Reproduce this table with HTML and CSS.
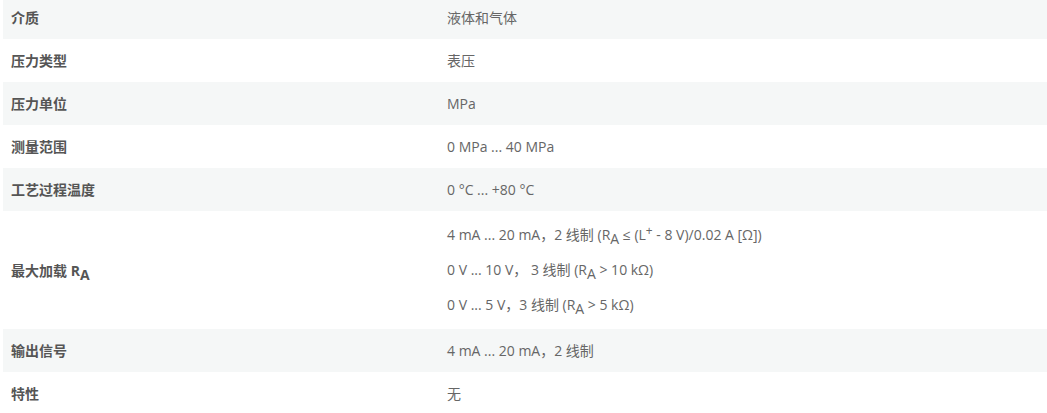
FILE: index.html
```html
<!DOCTYPE html>
<html lang="zh-CN">
<head>
<meta charset="utf-8">
<title>规格</title>
<link rel="stylesheet" href="styles.css">
</head>
<body>
<table class="spec">
  <colgroup><col class="col-label"><col class="col-value"></colgroup>
  <tbody>
    <tr class="odd"><th>介质</th><td>液体和气体</td></tr>
    <tr><th>压力类型</th><td>表压</td></tr>
    <tr class="odd"><th>压力单位</th><td>MPa</td></tr>
    <tr><th>测量范围</th><td>0 MPa ... 40 MPa</td></tr>
    <tr class="odd"><th>工艺过程温度</th><td>0 °C ... +80 °C</td></tr>
    <tr class="multi">
      <th>最大加载 R<sub>A</sub></th>
      <td>
        <div class="line">4 mA ... 20 mA，2 线制 (R<sub>A</sub> ≤ (L<sup>+</sup> - 8 V)/0.02 A [Ω])</div>
        <div class="line">0 V ... 10 V，&nbsp;3 线制 (R<sub>A</sub> &gt; 10 kΩ)</div>
        <div class="line">0 V ... 5 V，3 线制 (R<sub>A</sub> &gt; 5 kΩ)</div>
      </td>
    </tr>
    <tr class="odd"><th>输出信号</th><td>4 mA ... 20 mA，2 线制</td></tr>
    <tr><th>特性</th><td>无</td></tr>
  </tbody>
</table>
</body>
</html>
```
FILE: styles.css
```css
html, body {
  margin: 0;
  padding: 0;
  background: #ffffff;
}
body {
  padding-left: 3px;
  font-family: "Open Sans", "Noto Sans CJK SC", sans-serif;
  font-size: 14px;
  color: #666666;
}
.spec {
  width: 1044px;
  border-collapse: collapse;
  table-layout: fixed;
  margin-top: -4px;
}
.spec .col-label {
  width: 436px;
}
.spec th,
.spec td {
  padding: 12px 8px;
  line-height: 19px;
  text-align: left;
  vertical-align: middle;
}
.spec th {
  font-weight: 700;
  color: #555555;
}
.spec tr.odd {
  background: #f5f7f7;
}
.spec sub {
  font-size: 1em;
  vertical-align: -4px;
  line-height: 0;
}
.spec sup {
  font-size: 0.85em;
  vertical-align: 5px;
  line-height: 0;
}
.spec tr.multi td {
  padding-top: 14px;
  padding-bottom: 15px;
}
.spec .line + .line {
  margin-top: 16px;
}
```
